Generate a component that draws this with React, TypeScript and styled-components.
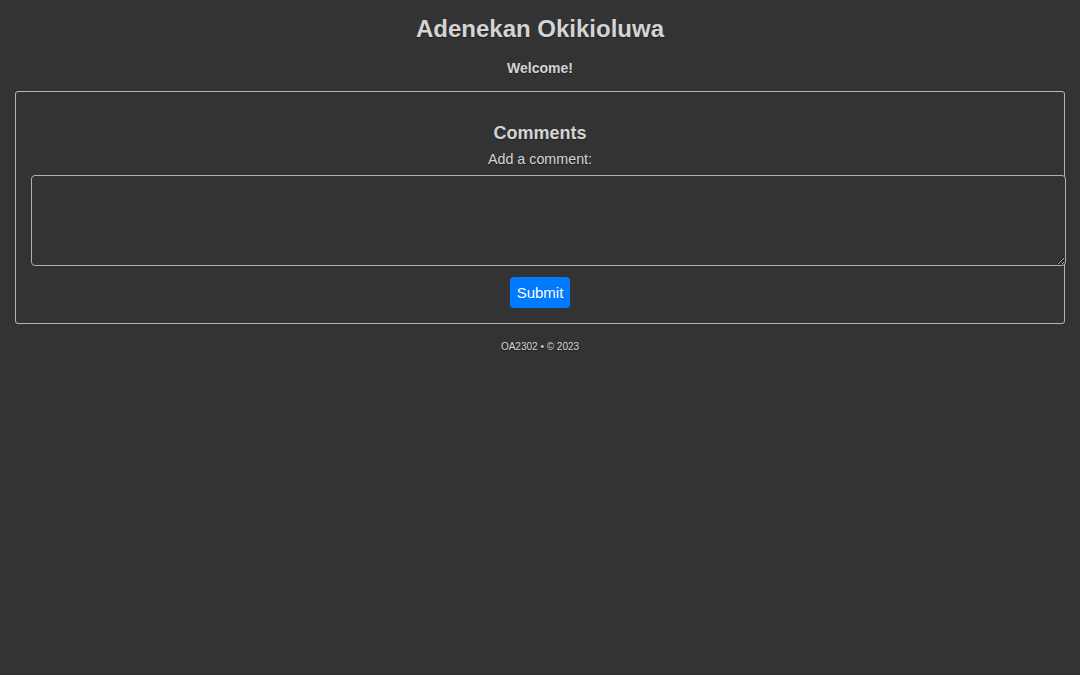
import React from "react";
import styled, { createGlobalStyle } from "styled-components";

const Global = createGlobalStyle`
  html, body { margin: 0; padding: 0; background: #333333; }
  body {
    font-family: "Liberation Sans", Arial, sans-serif;
    color: #d4d4d4;
    text-shadow: 0 1px 1px rgba(0,0,0,0.35);
  }
`;

const Page = styled.div`
  display: flex;
  flex-direction: column;
  align-items: stretch;
  padding: 0 15px;
  min-height: 675px;
  box-sizing: border-box;
`;

const Header = styled.header`
  display: flex;
  flex-direction: column;
  align-items: center;
  padding-top: 15px;
`;

const Title = styled.h1`
  margin: 0;
  font-size: 24px;
  line-height: 28px;
  font-weight: bold;
`;

const Welcome = styled.p`
  margin: 17px 0 0;
  font-size: 14px;
  line-height: 17px;
  font-weight: bold;
`;

const Section = styled.section`
  margin-top: 14px;
  border: 1px solid #b5b5b5;
  border-radius: 3px;
  padding: 15px;
  display: flex;
  flex-direction: column;
  align-items: center;
`;

const SectionTitle = styled.h2`
  margin: 15px 0 0;
  font-size: 18px;
  line-height: 22px;
  font-weight: bold;
`;

const Label = styled.label`
  margin-top: 6px;
  font-size: 14.3px;
  line-height: 18px;
`;

const TextArea = styled.textarea`
  display: block;
  align-self: stretch;
  margin-top: 7px;
  width: 100%;
  height: 75px;
  padding: 7px 8px 7px 7px;
  border: 1px solid #b0b0b0;
  border-radius: 4px;
  background: #333333;
  color: #d4d4d4;
  font-family: "Liberation Sans", Arial, sans-serif;
  font-size: 14px;
  box-sizing: content-box;
`;

const Button = styled.button`
  margin-top: 11px;
  height: 31px;
  padding: 0 7px;
  border: none;
  border-radius: 4px;
  background: #007bff;
  color: #ffffff;
  font-family: "Liberation Sans", Arial, sans-serif;
  font-size: 15px;
  cursor: pointer;
`;

const Footer = styled.footer`
  margin-top: 17px;
  text-align: center;
  font-size: 10px;
  line-height: 12px;
`;

export default function App() {
  return (
    <>
      <Global />
      <Page>
        <Header>
          <Title>Adenekan Okikioluwa</Title>
          <Welcome>Welcome!</Welcome>
        </Header>
        <Section>
          <SectionTitle>Comments</SectionTitle>
          <Label htmlFor="comment">Add a comment:</Label>
          <TextArea id="comment" />
          <Button type="button">Submit</Button>
        </Section>
        <Footer>OA2302 • © 2023</Footer>
      </Page>
    </>
  );
}
